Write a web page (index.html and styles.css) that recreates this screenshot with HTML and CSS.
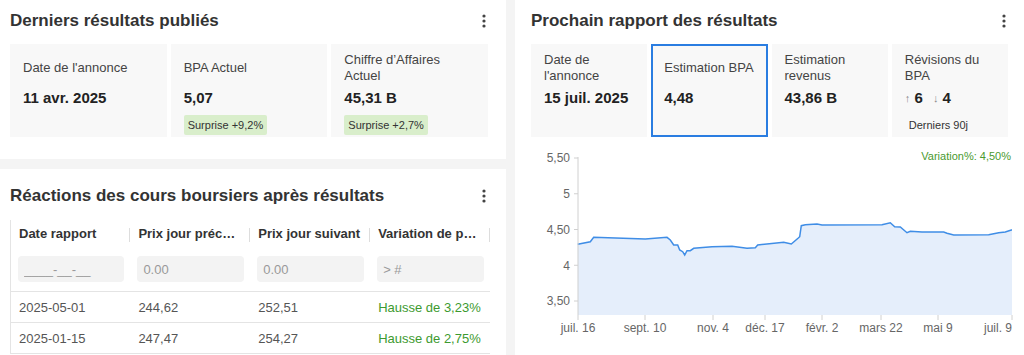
FILE: index.html
```html
<!DOCTYPE html>
<html>

<head>
  <title>Résultats</title>
  <link rel="stylesheet" href="styles.css">
</head>

<body>
  <div class="page">
    <div class="col-left">
      <!-- Derniers résultats -->
      <section class="panel panel-latest">
        <div class="panel-head">
          <h2>Derniers résultats publiés</h2>
          <svg class="dots" width="4" height="14" viewBox="0 0 4 14"><circle cx="2" cy="2" r="1.6"/><circle cx="2" cy="7" r="1.6"/><circle cx="2" cy="12" r="1.6"/></svg>
        </div>
        <div class="stats stats-3">
          <div class="stat">
            <div class="stat-label">Date de l'annonce</div>
            <div class="stat-value">11 avr. 2025</div>
          </div>
          <div class="stat">
            <div class="stat-label">BPA Actuel</div>
            <div class="stat-value">5,07</div>
            <span class="badge">Surprise +9,2%</span>
          </div>
          <div class="stat">
            <div class="stat-label">Chiffre d’Affaires Actuel</div>
            <div class="stat-value">45,31 B</div>
            <span class="badge">Surprise +2,7%</span>
          </div>
        </div>
      </section>

      <!-- Réactions des cours -->
      <section class="panel panel-reactions">
        <div class="panel-head">
          <h2>Réactions des cours boursiers après résultats</h2>
          <svg class="dots" width="4" height="14" viewBox="0 0 4 14"><circle cx="2" cy="2" r="1.6"/><circle cx="2" cy="7" r="1.6"/><circle cx="2" cy="12" r="1.6"/></svg>
        </div>
        <table class="reactions">
          <thead>
            <tr>
              <th><span>Date rapport</span></th>
              <th><span>Prix jour précédent</span></th>
              <th><span>Prix jour suivant</span></th>
              <th class="last"><span>Variation de prix</span></th>
            </tr>
            <tr class="filter">
              <td><input type="text" placeholder="____-__-__"></td>
              <td><input type="text" placeholder="0.00"></td>
              <td><input type="text" placeholder="0.00"></td>
              <td><input type="text" placeholder="> #"></td>
            </tr>
          </thead>
          <tbody>
            <tr>
              <td>2025-05-01</td>
              <td>244,62</td>
              <td>252,51</td>
              <td class="up">Hausse de 3,23%</td>
            </tr>
            <tr>
              <td>2025-01-15</td>
              <td>247,47</td>
              <td>254,27</td>
              <td class="up">Hausse de 2,75%</td>
            </tr>
          </tbody>
        </table>
      </section>
    </div>

    <!-- Prochain rapport -->
    <section class="panel panel-next">
      <div class="panel-head">
        <h2>Prochain rapport des résultats</h2>
        <svg class="dots" width="4" height="14" viewBox="0 0 4 14"><circle cx="2" cy="2" r="1.6"/><circle cx="2" cy="7" r="1.6"/><circle cx="2" cy="12" r="1.6"/></svg>
      </div>
      <div class="stats stats-4">
        <div class="stat">
          <div class="stat-label">Date de l'annonce</div>
          <div class="stat-value">15 juil. 2025</div>
        </div>
        <div class="stat active">
          <div class="stat-label">Estimation BPA</div>
          <div class="stat-value">4,48</div>
        </div>
        <div class="stat">
          <div class="stat-label">Estimation revenus</div>
          <div class="stat-value">43,86 B</div>
        </div>
        <div class="stat">
          <div class="stat-label">Révisions du BPA</div>
          <div class="stat-value"><span class="arrow">&#8593;</span> 6 <span class="arrow arrow-down">&#8595;</span> 4</div>
          <span class="badge plain">Derniers 90j</span>
        </div>
      </div>

      <svg class="chart" width="493" height="210" viewBox="531 145 493 210">
        <text class="variation" x="1011" y="160" text-anchor="end">Variation%: 4,50%</text>
        <polygon class="area" points="577.7,244.3 590.3,241.7 593.7,237.3 645.3,239 667,237.3 670.3,240 673.7,245 677.7,245 679.7,250 682.7,251.7 684.7,255 687,250.7 690.3,250.7 693.7,248.3 712,246.7 732,246.3 747,248.3 755.3,247.7 757.7,245 783.7,242.3 791.3,244 798,238.3 799.7,236.7 801.3,225.7 805.3,224.7 817,224 822,225 882,224.7 890.3,222.7 894.7,226.7 900.3,227 907,232.7 910.3,231.3 922,232 943.7,232 947,233.3 953.7,235 988.7,234.7 998.7,232.7 1005.3,232 1011.3,230 1012,230 1012,315 578,315"/>
        <polyline class="line" points="577.7,244.3 590.3,241.7 593.7,237.3 645.3,239 667,237.3 670.3,240 673.7,245 677.7,245 679.7,250 682.7,251.7 684.7,255 687,250.7 690.3,250.7 693.7,248.3 712,246.7 732,246.3 747,248.3 755.3,247.7 757.7,245 783.7,242.3 791.3,244 798,238.3 799.7,236.7 801.3,225.7 805.3,224.7 817,224 822,225 882,224.7 890.3,222.7 894.7,226.7 900.3,227 907,232.7 910.3,231.3 922,232 943.7,232 947,233.3 953.7,235 988.7,234.7 998.7,232.7 1005.3,232 1011.3,230 1012,230"/>
        <g class="axis">
          <line x1="578" y1="157" x2="578" y2="315"/>
          <line x1="574" y1="158" x2="578" y2="158"/>
          <line x1="574" y1="193.75" x2="578" y2="193.75"/>
          <line x1="574" y1="229.5" x2="578" y2="229.5"/>
          <line x1="574" y1="265.25" x2="578" y2="265.25"/>
          <line x1="574" y1="301" x2="578" y2="301"/>
          <line x1="578" y1="315" x2="578" y2="320"/>
          <line x1="645" y1="315" x2="645" y2="320"/>
          <line x1="713" y1="315" x2="713" y2="320"/>
          <line x1="765" y1="315" x2="765" y2="320"/>
          <line x1="822" y1="315" x2="822" y2="320"/>
          <line x1="881" y1="315" x2="881" y2="320"/>
          <line x1="938" y1="315" x2="938" y2="320"/>
          <line x1="1012" y1="315" x2="1012" y2="320"/>
        </g>
        <g class="labels" text-anchor="end">
          <text x="570" y="162">5,50</text>
          <text x="570" y="198">5</text>
          <text x="570" y="234">4,50</text>
          <text x="570" y="270">4</text>
          <text x="570" y="305">3,50</text>
        </g>
        <g class="labels" text-anchor="middle">
          <text x="578" y="332">juil. 16</text>
          <text x="645" y="332">sept. 10</text>
          <text x="713" y="332">nov. 4</text>
          <text x="765" y="332">déc. 17</text>
          <text x="822" y="332">févr. 2</text>
          <text x="881" y="332">mars 22</text>
          <text x="938" y="332">mai 9</text>
          <text x="1012" y="332" text-anchor="end">juil. 9</text>
        </g>
      </svg>
    </section>
  </div>
</body>

</html>
```

FILE: styles.css
```css
body {
  margin: 0;
  background-color: #f4f4f4;
  font-family: "Liberation Sans", Arial, sans-serif;
  color: #333;
}

/* Mise en page */
.page {
  display: grid;
  grid-template-columns: 506px minmax(0, 1fr);
  column-gap: 9px;
  height: 355px;
  overflow: hidden;
}

.col-left {
  display: flex;
  flex-direction: column;
  gap: 10px;
}

.panel {
  background-color: #fff;
  box-sizing: border-box;
  min-width: 0;
}

.panel-latest {
  height: 159px;
  padding: 11px 18px 0 10px;
}

.panel-reactions {
  flex: 1;
  padding: 17px 18px 0 10px;
  overflow: hidden;
}

.panel-next {
  padding: 11px 16px 0 16px;
}

.panel-head {
  display: flex;
  justify-content: space-between;
  align-items: center;
  height: 20px;
  margin-bottom: 13px;
  padding-right: 2px;
}

.panel-reactions .panel-head {
  margin-bottom: 14px;
}

h2 {
  margin: 0;
  font-size: 17px;
  line-height: 20px;
  font-weight: bold;
  color: #333;
}

.dots {
  fill: #444;
}

/* Cartes de chiffres */
.stats {
  display: grid;
  gap: 4px;
}

.stats-3 {
  grid-template-columns: repeat(3, minmax(0, 1fr));
}

.stats-4 {
  grid-template-columns: repeat(4, minmax(0, 1fr));
}

.stat {
  background-color: #f8f8f8;
  height: 93px;
  padding: 8px 13px 0;
  box-sizing: border-box;
}

.stat.active {
  border: 2px solid #2a7de1;
  padding: 6px 11px 0;
}

.stat-label {
  min-height: 32px;
  display: flex;
  align-items: center;
  font-size: 13px;
  line-height: 16px;
  color: #444;
}

.stat-value {
  margin-top: 4px;
  font-size: 15px;
  line-height: 20px;
  font-weight: bold;
  color: #222;
}

.arrow {
  font-size: 11px;
  font-weight: normal;
  color: #888;
  vertical-align: 1px;
}

.arrow-down {
  margin-left: 6px;
}

.badge {
  display: inline-block;
  margin-top: 7px;
  padding: 0 4px;
  font-size: 11px;
  line-height: 20px;
  background-color: #d9eecb;
  border-radius: 2px;
  color: #333;
}

.badge.plain {
  background: none;
}

/* Tableau des réactions */
.reactions {
  width: 480px;
  table-layout: fixed;
  border-collapse: collapse;
  border-left: 1px solid #e4e4e4;
  font-size: 13px;
}

.reactions th {
  height: 27px;
  padding: 0 8px;
  text-align: left;
  font-weight: bold;
  color: #333;
  position: relative;
}

.reactions th.last {
  padding-right: 12px;
}

.reactions th span {
  display: block;
  white-space: nowrap;
  overflow: hidden;
  text-overflow: ellipsis;
}

.reactions th::after {
  content: "";
  position: absolute;
  right: 0;
  top: 8px;
  width: 1px;
  height: 14px;
  background-color: #ddd;
}

.reactions td {
  height: 30px;
  padding: 0 8px;
  color: #555;
  border-bottom: 1px solid #e4e4e4;
}

.reactions .filter td {
  height: 44px;
  padding: 0 6px 0 7px;
}

.filter input {
  display: block;
  width: 100%;
  height: 26px;
  box-sizing: border-box;
  border: none;
  border-radius: 4px;
  background-color: #f3f3f3;
  padding: 0 6px;
  font-family: inherit;
  font-size: 13px;
}

.filter input::placeholder {
  color: #999;
}

.reactions td.up {
  color: #3d9a2f;
}

/* Graphique */
.chart {
  display: block;
  margin-top: 8px;
}

.chart .area {
  fill: #e5eefb;
}

.chart .line {
  fill: none;
  stroke: #3f8de6;
  stroke-width: 1.5;
}

.chart .axis line {
  stroke: #d0d0d0;
  stroke-width: 1;
}

.chart .labels text {
  font-size: 12px;
  fill: #666;
}

.chart .variation {
  font-size: 11px;
  fill: #4a9a2f;
}
```
